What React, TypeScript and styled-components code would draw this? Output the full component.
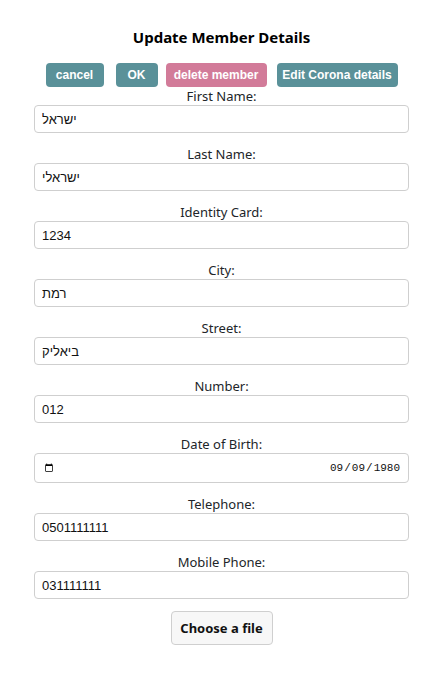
import React from "react";
import styled, { createGlobalStyle } from "styled-components";

const Global = createGlobalStyle`
  html, body { margin: 0; padding: 0; background: #ffffff; }
  body { font-family: "Noto Sans", "Open Sans", sans-serif; color: #212529; }
`;

const Page = styled.div`
  width: 427px;
  display: flex;
  flex-direction: column;
  align-items: center;
  padding-left: 16px;
  box-sizing: border-box;
`;

const Title = styled.h2`
  margin: 26px 0 15px;
  font-size: 15px;
  line-height: 22px;
  font-weight: 700;
  color: #000;
`;

const Actions = styled.div`
  display: flex;
  align-items: center;
  height: 24px;
`;

const ActionButton = styled.button<{ $tone: "teal" | "pink"; $w: number; $ml: number }>`
  width: ${(p) => p.$w}px;
  margin-left: ${(p) => p.$ml}px;
  height: 24px;
  padding: 0;
  border: none;
  border-radius: 4px;
  background: ${(p) => (p.$tone === "teal" ? "#5a9199" : "#d27b99")};
  color: #fff;
  font-family: "Liberation Sans", Arial, sans-serif;
  font-size: 12px;
  font-weight: 700;
  cursor: pointer;
`;

const Form = styled.form`
  width: 375px;
  display: flex;
  flex-direction: column;
`;

const Field = styled.div`
  display: flex;
  flex-direction: column;
  align-items: stretch;
  margin-bottom: 12px;
`;

const Label = styled.label`
  display: block;
  text-align: center;
  font-size: 13px;
  line-height: 18px;
  color: #212529;
`;

const TextInput = styled.input`
  box-sizing: border-box;
  width: 100%;
  height: 28px;
  margin: 0;
  padding: 0 7px;
  border: 1px solid #cfcfcf;
  border-radius: 4px;
  font-family: "Liberation Sans", Arial, sans-serif;
  font-size: 13px;
  color: #111;
  background: #fff;
  outline: none;
`;

const DateInput = styled(TextInput)`
  height: 30px;
  font-family: "Liberation Mono", "DejaVu Sans Mono", monospace;
  font-size: 11px;
  padding: 0 0 0 9px;

  &::-webkit-datetime-edit {
    order: 2;
    flex: 0 0 auto;
    margin-left: auto;
    margin-right: -7px;
  }
  &::-webkit-calendar-picker-indicator {
    order: 1;
    width: 10px;
    height: 10px;
    margin: 0 auto 0 0;
    padding: 0;
  }
`;

const FileButton = styled.label`
  align-self: center;
  box-sizing: border-box;
  width: 102px;
  height: 34px;
  display: flex;
  align-items: center;
  justify-content: center;
  background: #f7f7f7;
  border: 1px solid #cfcfcf;
  border-radius: 4px;
  font-size: 13px;
  font-weight: 700;
  color: #111;
  cursor: pointer;
`;

const HiddenFile = styled.input`
  display: none;
`;

const fields: { label: string; value: string; type?: string }[] = [
  { label: "First Name:", value: "ישראל" },
  { label: "Last Name:", value: "ישראלי" },
  { label: "Identity Card:", value: "1234" },
  { label: "City:", value: "רמת" },
  { label: "Street:", value: "ביאליק" },
  { label: "Number:", value: "012" },
  { label: "Date of Birth:", value: "1980-09-09", type: "date" },
  { label: "Telephone:", value: "0501111111" },
  { label: "Mobile Phone:", value: "031111111" },
];

export default function App() {
  return (
    <>
      <Global />
      <Page>
        <Title>Update Member Details</Title>
        <Actions>
          <ActionButton $tone="teal" $w={58} $ml={0}>cancel</ActionButton>
          <ActionButton $tone="teal" $w={42} $ml={12}>OK</ActionButton>
          <ActionButton $tone="pink" $w={101} $ml={8}>delete member</ActionButton>
          <ActionButton $tone="teal" $w={121} $ml={10}>Edit Corona details</ActionButton>
        </Actions>
        <Form onSubmit={(e) => e.preventDefault()}>
          {fields.map((f) => (
            <Field key={f.label}>
              <Label>{f.label}</Label>
              {f.type === "date" ? (
                <DateInput type="date" defaultValue={f.value} />
              ) : (
                <TextInput type="text" defaultValue={f.value} />
              )}
            </Field>
          ))}
          <FileButton>
            Choose a file
            <HiddenFile type="file" />
          </FileButton>
        </Form>
      </Page>
    </>
  );
}
